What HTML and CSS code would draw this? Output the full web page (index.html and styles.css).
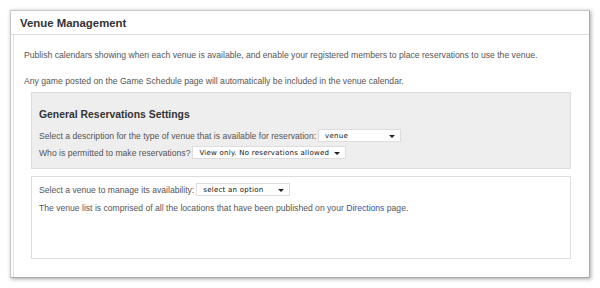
FILE: index.html
```html
<!DOCTYPE html>
<html>
<head>
<meta charset="utf-8">
<link rel="stylesheet" href="styles.css">
</head>
<body>
<div class="panel">
  <div class="panel-head"><h1 class="title">Venue Management</h1></div>
  <div class="panel-body">
    <p class="intro">Publish calendars showing when each venue is available, and enable your registered members to place reservations to use the venue.</p>
    <p class="intro last">Any game posted on the Game Schedule page will automatically be included in the venue calendar.</p>
    <div class="settings">
      <h2 class="settings-title">General Reservations Settings</h2>
      <div class="row">
        <span class="label">Select a description for the type of venue that is available for reservation:</span>
        <span class="select sel-type"><span class="sel-text">venue</span><span class="caret"></span></span>
      </div>
      <div class="row">
        <span class="label">Who is permitted to make reservations?</span>
        <span class="select sel-who"><span class="sel-text">View only. No reservations allowed</span><span class="caret"></span></span>
      </div>
    </div>
    <div class="venues">
      <div class="row">
        <span class="label">Select a venue to manage its availability:</span>
        <span class="select sel-venue"><span class="sel-text">select an option</span><span class="caret"></span></span>
      </div>
      <p class="note">The venue list is comprised of all the locations that have been published on your <a class="link" href="#">Directions</a> page.</p>
    </div>
  </div>
</div>
</body>
</html>
```
FILE: styles.css
```css
html, body {
  margin: 0;
  padding: 0;
  background: #fff;
}
body {
  padding: 10px;
  font-family: "Liberation Sans", Arial, sans-serif;
  color: #555;
}
.panel {
  width: 578px;
  height: 266px;
  border: 1px solid #c8c8c8;
  border-right-color: #aaa;
  border-bottom-color: #aaa;
  box-shadow: 1px 1px 4px rgba(0,0,0,0.35);
  background: #fff;
  display: flex;
  flex-direction: column;
}
.panel-head {
  height: 23px;
  border-bottom: 1px solid #ddd;
  display: flex;
  align-items: center;
  padding-left: 9px;
}
.title {
  margin: 0;
  font-size: 11.4px;
  font-weight: bold;
  color: #333;
}
.panel-body {
  flex: 1;
  margin-left: 2px;
  border-left: 1px solid #e2e2e2;
  padding: 13px 18px 0 10px;
}
.intro {
  margin: 0 0 12px 0;
  font-size: 8.65px;
  line-height: 14px;
}
.intro.last {
  margin-bottom: 0;
}
.settings {
  margin: 4px 0 0 7px;
  background: #eee;
  border: 1px solid #ddd;
  height: 75px;
  padding: 0 0 0 7px;
}
.settings-title {
  margin: 15px 0 0 0;
  font-size: 10.4px;
  line-height: 14px;
  font-weight: bold;
  color: #333;
}
.row {
  display: flex;
  align-items: center;
  gap: 2px;
  font-size: 8.6px;
}
.settings .row:first-of-type {
  margin-top: 7px;
}
.settings .row + .row {
  margin-top: 4px;
}
.label {
  white-space: nowrap;
}
.select {
  display: inline-flex;
  align-items: center;
  justify-content: space-between;
  gap: 4px;
  height: 11px;
  background: #fff;
  border: 1px solid #ddd;
  padding: 0 5px 0 6px;
  font-family: "DejaVu Sans", Verdana, sans-serif;
  font-size: 7px;
  letter-spacing: 0.25px;
  color: #111;
  box-sizing: content-box;
  white-space: nowrap;
}
.sel-type { width: 70px; }
.sel-who { width: 141px; }
.sel-venue { width: 81px; }
.caret {
  flex: none;
  width: 0;
  height: 0;
  border-left: 3px solid transparent;
  border-right: 3px solid transparent;
  border-top: 3px solid #222;
  margin-top: 1px;
}
.venues {
  margin: 7px 0 0 7px;
  border: 1px solid #ddd;
  height: 81px;
  padding: 0 0 0 7px;
}
.venues .row {
  margin-top: 6px;
}
.note {
  margin: 6px 0 0 0;
  font-size: 8.6px;
  line-height: 12px;
}
.link {
  color: #2a55b0;
  text-decoration: none;
}
```
